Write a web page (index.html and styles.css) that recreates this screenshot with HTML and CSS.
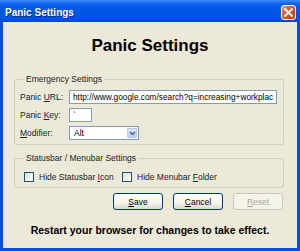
FILE: index.html
```html
<!DOCTYPE html>
<html lang="en">
<head>
    <meta charset="utf-8" />
    <title>Panic Settings</title>
    <link rel="stylesheet" href="styles.css">
</head>
<body>
    <div class="window">
        <div class="titlebar">
            <span class="title">Panic Settings</span>
            <span class="close-btn">
                <svg width="9" height="9" viewBox="0 0 9 9">
                    <path d="M1 1L8 8M8 1L1 8" stroke="#fff" stroke-width="1.8" stroke-linecap="square" />
                </svg>
            </span>
        </div>

        <div class="client">
            <h1 class="heading">Panic Settings</h1>

            <fieldset class="group group-emergency">
                <legend>Emergency Settings</legend>
                <div class="form-grid">
                    <label class="field-label">Panic <u>U</u>RL:</label>
                    <div class="textbox textbox-url">http://www.google.com/search?q=increasing+workplac</div>

                    <label class="field-label">Panic <u>K</u>ey:</label>
                    <div class="textbox textbox-key">`</div>

                    <label class="field-label"><u>M</u>odifier:</label>
                    <div class="select">
                        <span class="select-value">Alt</span>
                        <span class="select-arrow">
                            <svg width="7" height="5" viewBox="0 0 7 5">
                                <path d="M1 1L3.5 3.5L6 1" fill="none" stroke="#4d6185" stroke-width="1.5" />
                            </svg>
                        </span>
                    </div>
                </div>
            </fieldset>

            <fieldset class="group group-statusbar">
                <legend>Statusbar / Menubar Settings</legend>
                <div class="checks">
                    <label class="check check-first"><span class="checkbox"></span><span>Hide Statusbar <u>I</u>con</span></label>
                    <label class="check"><span class="checkbox"></span><span>Hide Menubar <u>F</u>older</span></label>
                </div>
            </fieldset>

            <div class="buttons">
                <button class="btn"><u>S</u>ave</button>
                <button class="btn"><u>C</u>ancel</button>
                <button class="btn btn-disabled"><u>R</u>eset</button>
            </div>

            <p class="note">Restart your browser for changes to take effect.</p>
        </div>
    </div>
</body>
</html>
```

FILE: styles.css
```css
* {
    box-sizing: border-box;
}

body {
    margin: 0;
    font-family: "Liberation Sans", Arial, sans-serif;
    color: #000;
}

.window {
    width: 300px;
    height: 251px;
    display: flex;
    flex-direction: column;
}

/* title bar */
.titlebar {
    height: 22px;
    flex: none;
    display: flex;
    align-items: center;
    justify-content: space-between;
    padding: 3px 4px 0 5px;
    background: linear-gradient(to bottom, #3d8ff5 0%, #0b62ec 18%, #0156e6 50%, #0253e3 82%, #0a47c9 100%);
}

.title {
    color: #fff;
    font-size: 10px;
    font-weight: bold;
    text-shadow: 1px 1px 0 #0a2a8a;
}

.close-btn {
    width: 15px;
    height: 15px;
    display: flex;
    align-items: center;
    justify-content: center;
    border: 1px solid #fff;
    border-radius: 3px;
    background: linear-gradient(135deg, #ec9a7e 0%, #e0532d 45%, #c83b16 100%);
}

/* client area */
.client {
    flex: 1;
    display: flex;
    flex-direction: column;
    background: #ece9d8;
    border: 3px solid #0a4fe0;
    border-top: 0;
}

.heading {
    margin: 14px 0 0;
    font-size: 17px;
    line-height: 20px;
    font-weight: bold;
    text-align: center;
}

.group {
    margin: 18px 13px 0 11px;
    padding: 0 6px 4px 5px;
    border: 1px solid #d0d0bf;
    border-radius: 3px;
    min-width: 0;
}

.group legend {
    margin-left: 4px;
    padding: 0 2px;
    font-size: 8.5px;
    line-height: 10px;
    color: #222;
}

.group-statusbar {
    margin-top: 8px;
    padding-bottom: 5px;
}

.form-grid {
    margin-top: 6px;
    display: grid;
    grid-template-columns: 49px 1fr;
    grid-auto-rows: 14px;
    row-gap: 4px;
    align-items: center;
}

.field-label {
    font-size: 8.5px;
    color: #222;
}

.textbox {
    height: 14px;
    padding: 0 3px;
    border: 1px solid #7f9db9;
    background: #fff;
    font-size: 8.3px;
    line-height: 12px;
    white-space: nowrap;
    overflow: hidden;
}

.textbox-key {
    width: 23px;
}

.select {
    width: 70px;
    height: 14px;
    display: flex;
    align-items: center;
    justify-content: space-between;
    padding: 0 1px 0 4px;
    border: 1px solid #7f9db9;
    background: #fff;
    font-size: 8.5px;
}

.select-arrow {
    width: 10px;
    height: 10px;
    display: flex;
    align-items: center;
    justify-content: center;
    border: 1px solid #b5c8f4;
    border-radius: 1px;
    background: linear-gradient(to bottom, #dce6fd, #b9cdfa);
}

/* checkboxes */
.checks {
    margin-top: 8px;
    height: 11px;
    display: flex;
    align-items: center;
    padding-left: 4px;
}

.check {
    display: flex;
    align-items: center;
    font-size: 8.5px;
    color: #222;
}

.check-first {
    width: 98px;
}

.checkbox {
    width: 10px;
    height: 10px;
    margin-right: 5px;
    border: 1px solid #1c5180;
    background: linear-gradient(135deg, #dcdcd7, #fff);
}

/* buttons */
.buttons {
    margin: 5px 14px 0 0;
    display: flex;
    justify-content: flex-end;
    gap: 10px;
}

.btn {
    width: 50px;
    height: 17px;
    padding: 0;
    border: 1px solid #003c74;
    border-radius: 3px;
    background: linear-gradient(to bottom, #fff 0%, #f4f3ee 60%, #dcd8cc 100%);
    font-family: inherit;
    font-size: 8.5px;
    color: #000;
}

.btn-disabled {
    border-color: #cac8bb;
    background: #f5f4ea;
    color: #aca899;
}

.note {
    margin: 13px 0 0;
    font-size: 10.5px;
    line-height: 14px;
    font-weight: bold;
    text-align: center;
}
```
